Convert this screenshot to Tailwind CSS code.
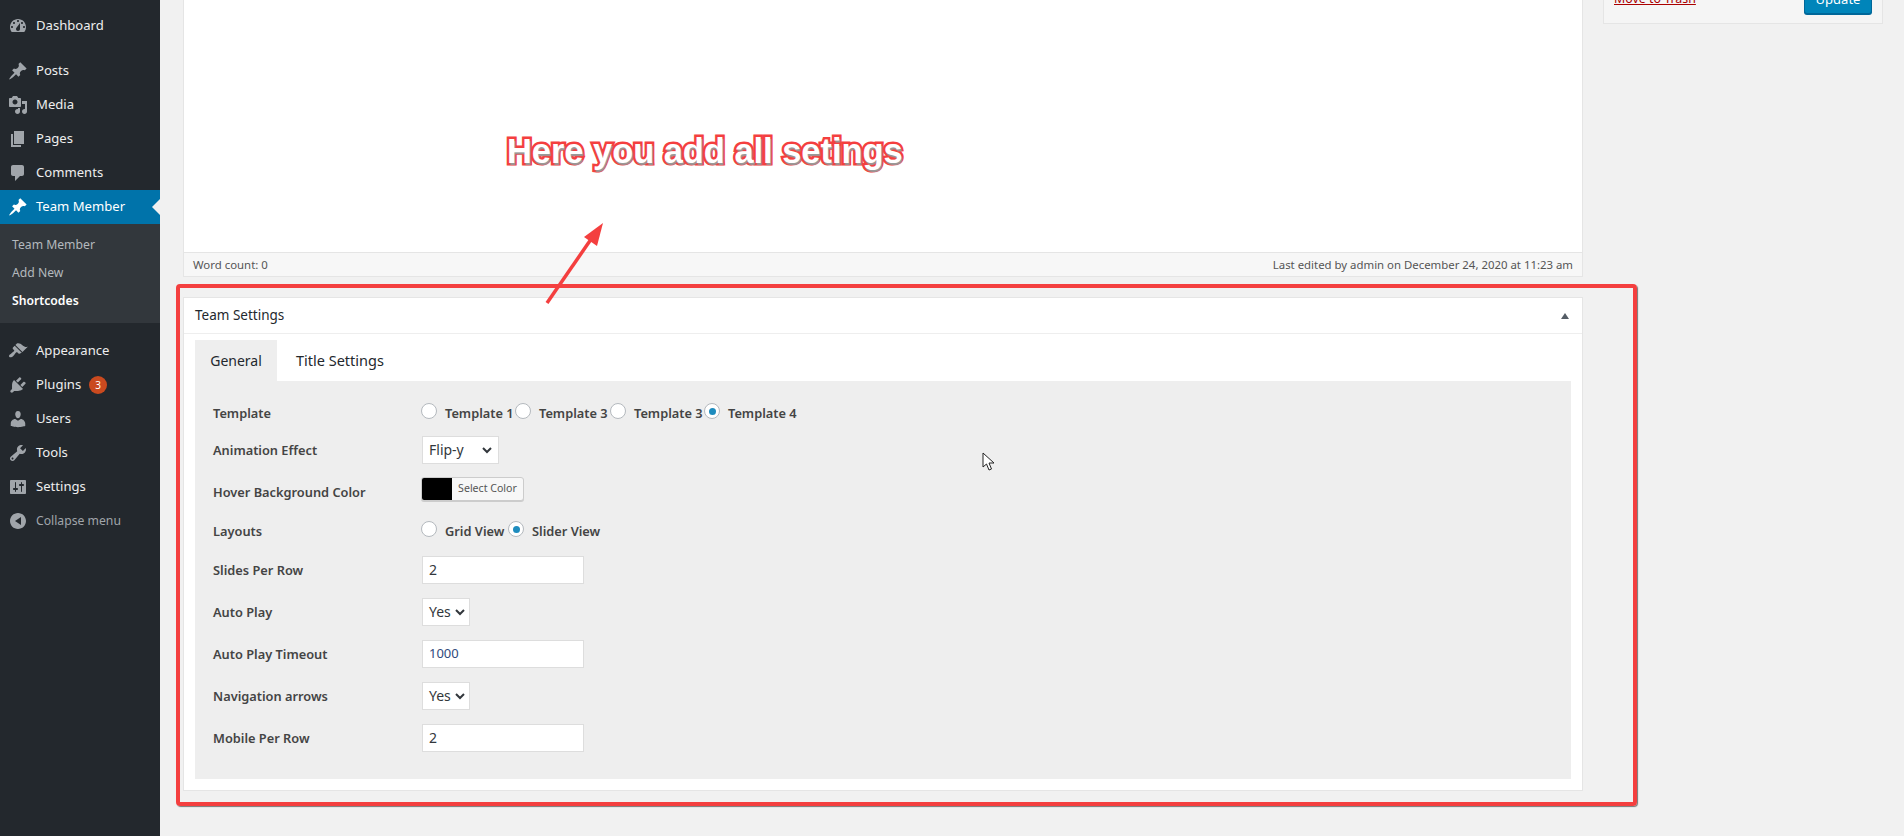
<!DOCTYPE html>
<html lang="en">
<head>
<meta charset="UTF-8">
<title>Edit Team - Team Settings</title>
<script src="https://cdn.jsdelivr.net/npm/@tailwindcss/browser@4"></script>
</head>
<body class="relative h-[836px] overflow-hidden bg-[#f1f1f1] font-['Noto_Sans',sans-serif] text-[13px] text-[#444]">
<div class="flex h-[836px]">

  <!-- admin menu -->
  <aside class="w-[160px] shrink-0 bg-[#23282d] pt-[9px] text-[13.1px] text-[#eee]">
    <a class="flex h-[34px] items-center gap-2 pl-2"><svg class="h-5 w-5 fill-[#a0a5aa]" viewBox="0 0 20 20"><path d="M3.76 16h12.48c1.1-1.37 1.76-3.11 1.76-5 0-4.42-3.58-8-8-8s-8 3.58-8 8c0 1.89.66 3.63 1.76 5zM10 4c.55 0 1 .45 1 1s-.45 1-1 1-1-.45-1-1 .45-1 1-1zM6 6c.55 0 1 .45 1 1s-.45 1-1 1-1-.45-1-1 .45-1 1-1zm8 0c.55 0 1 .45 1 1s-.45 1-1 1-1-.45-1-1 .45-1 1-1zm-5.37 5.55L12 7v6c0 1.1-.9 2-2 2s-2-.9-2-2c0-.57.24-1.08.63-1.45zM4 10c.55 0 1 .45 1 1s-.45 1-1 1-1-.45-1-1 .45-1 1-1zm12 0c.55 0 1 .45 1 1s-.45 1-1 1-1-.45-1-1 .45-1 1-1z"/></svg>Dashboard</a>
    <a class="mt-[11px] flex h-[34px] items-center gap-2 pl-2"><svg class="h-5 w-5 fill-[#a0a5aa]" viewBox="0 0 20 20"><path d="M10.44 3.02l1.82-1.82 6.36 6.35-1.83 1.82c-1.05-.68-2.48-.57-3.41.36l-.75.75c-.92.93-1.04 2.35-.35 3.41l-1.83 1.82-2.41-2.41-2.8 2.79c-.42.42-3.38 2.71-3.8 2.29s1.86-3.39 2.28-3.81l2.79-2.79L4.1 9.36l1.83-1.82c1.05.69 2.48.57 3.4-.36l.75-.75c.93-.92 1.05-2.35.36-3.41z"/></svg>Posts</a>
    <a class="flex h-[34px] items-center gap-2 pl-2"><svg class="h-5 w-5 fill-[#a0a5aa]" viewBox="0 0 20 20"><path d="M13 11V4c0-.55-.45-1-1-1h-1.67L9 1H5L3.67 3H2c-.55 0-1 .45-1 1v7c0 .55.45 1 1 1h10c.55 0 1-.45 1-1zM7 4.5c1.38 0 2.5 1.12 2.5 2.5S8.38 9.5 7 9.5 4.5 8.38 4.5 7 5.62 4.5 7 4.5zM14 6h5v10.5c0 1.38-1.12 2.5-2.5 2.5S14 17.88 14 16.5s1.12-2.5 2.5-2.5c.17 0 .34.02.5.05V9h-3V6zm-4 8.05V13h2v3.5c0 1.38-1.12 2.5-2.5 2.5S7 17.88 7 16.5 8.12 14 9.5 14c.17 0 .34.02.5.05z"/></svg>Media</a>
    <a class="flex h-[34px] items-center gap-2 pl-2"><svg class="h-5 w-5 fill-[#a0a5aa]" viewBox="0 0 20 20"><path d="M6 15V2h10v13H6zm-1 1h8v2H3V5h2v11z"/></svg>Pages</a>
    <a class="flex h-[34px] items-center gap-2 pl-2"><svg class="h-5 w-5 fill-[#a0a5aa]" viewBox="0 0 20 20"><path d="M5 2h9c1.1 0 2 .9 2 2v7c0 1.1-.9 2-2 2h-2l-5 5v-5H5c-1.1 0-2-.9-2-2V4c0-1.1.9-2 2-2z"/></svg>Comments</a>
    <a class="relative flex h-[34px] items-center gap-2 bg-[#0073aa] pl-2 text-white"><svg class="h-5 w-5 fill-white" viewBox="0 0 20 20"><path d="M10.44 3.02l1.82-1.82 6.36 6.35-1.83 1.82c-1.05-.68-2.48-.57-3.41.36l-.75.75c-.92.93-1.04 2.35-.35 3.41l-1.83 1.82-2.41-2.41-2.8 2.79c-.42.42-3.38 2.71-3.8 2.29s1.86-3.39 2.28-3.81l2.79-2.79L4.1 9.36l1.83-1.82c1.05.69 2.48.57 3.4-.36l.75-.75c.93-.92 1.05-2.35.36-3.41z"/></svg>Team Member<span class="absolute right-0 top-[9px] h-0 w-0 border-y-[8px] border-r-[8px] border-y-transparent border-r-[#f1f1f1]"></span></a>
    <div class="bg-[#32373c] pb-2 pt-[7px] text-[12.2px] text-[#b4b9be]">
      <a class="flex h-[28px] items-center pl-3">Team Member</a>
      <a class="flex h-[28px] items-center pl-3">Add New</a>
      <a class="flex h-[28px] items-center pl-3 font-semibold text-white">Shortcodes</a>
    </div>
    <a class="mt-[11px] flex h-[34px] items-center gap-2 pl-2"><svg class="h-5 w-5 fill-[#a0a5aa]" viewBox="0 0 20 20"><path d="M14.48 11.06L7.41 3.99l1.5-1.5c.5-.56 2.3-.47 3.51.32 1.21.8 1.43 1.28 2.91 2.1 1.18.64 2.45 1.26 4.45.85zm-.71.71L6.7 4.7 4.93 6.47c-.39.39-.39 1.02 0 1.41l1.06 1.06c.39.39.39 1.03 0 1.42-.6.6-1.43 1.11-2.21 1.69-.35.26-.7.53-1.01.84C1.43 13.23.4 14.95 1.4 15.95c.98 1 2.78.09 4.1-1.23.31-.31.58-.66.85-1.01.58-.78 1.09-1.61 1.69-2.21.39-.39 1.03-.39 1.42 0l1.06 1.06c.39.39 1.02.39 1.41 0z"/></svg>Appearance</a>
    <a class="flex h-[34px] items-center gap-2 pl-2"><svg class="h-5 w-5 fill-[#a0a5aa]" viewBox="0 0 20 20"><path d="M13.11 4.36L9.87 7.6 8 5.73l3.24-3.24c.35-.34 1.05-.2 1.56.32.52.51.66 1.21.31 1.55zm-8 1.77l.91-1.12 9.01 9.01-1.19.84c-.71.71-2.63 1.16-3.82 1.16H6.14L4.9 17.26c-.59.59-1.54.59-2.12 0-.59-.58-.59-1.53 0-2.12l1.24-1.24v-3.88c0-1.13.4-3.19 1.09-3.89zm7.26 3.97l3.24-3.24c.34-.35 1.04-.21 1.55.31.52.51.66 1.21.31 1.55l-3.24 3.25z"/></svg>Plugins<span class="flex h-[18px] w-[18px] items-center justify-center rounded-full bg-[#ca4a1f] text-[10px] text-white">3</span></a>
    <a class="flex h-[34px] items-center gap-2 pl-2"><svg class="h-5 w-5 fill-[#a0a5aa]" viewBox="0 0 20 20"><path d="M10 9.25c-2.27 0-2.73-3.44-2.73-3.44C7 4.02 7.82 2 9.97 2c2.16 0 2.98 2.02 2.71 3.81 0 0-.41 3.44-2.68 3.44zm0 2.57L12.72 10c2.39 0 4.52 2.33 4.52 4.53v2.49s-3.65 1.13-7.24 1.13c-3.65 0-7.24-1.13-7.24-1.13v-2.49c0-2.25 1.94-4.48 4.47-4.48z"/></svg>Users</a>
    <a class="flex h-[34px] items-center gap-2 pl-2"><svg class="h-5 w-5 fill-[#a0a5aa]" viewBox="0 0 20 20"><path d="M16.68 9.77c-1.34 1.34-3.3 1.67-4.95.99l-5.41 6.52c-.99.99-2.59.99-3.58 0s-.99-2.59 0-3.57l6.52-5.42c-.68-1.65-.35-3.61.99-4.95 1.28-1.28 3.12-1.62 4.72-1.06l-2.89 2.89 2.82 2.82 2.86-2.87c.53 1.58.18 3.39-1.08 4.65zM3.81 16.21c.4.39 1.04.39 1.43 0 .4-.4.4-1.04 0-1.43-.39-.4-1.03-.4-1.43 0-.39.39-.39 1.03 0 1.43z"/></svg>Tools</a>
    <a class="flex h-[34px] items-center gap-2 pl-2"><svg class="h-5 w-5 fill-[#a0a5aa]" viewBox="0 0 20 20"><path d="M18 16V4c0-.55-.45-1-1-1H3c-.55 0-1 .45-1 1v12c0 .55.45 1 1 1h14c.55 0 1-.45 1-1zM8 11h1c.55 0 1 .45 1 1s-.45 1-1 1H8v1.5c0 .28-.22.5-.5.5s-.5-.22-.5-.5V13H6c-.55 0-1-.45-1-1s.45-1 1-1h1V5.5c0-.28.22-.5.5-.5s.5.22.5.5V11zm5-2h-1c-.55 0-1-.45-1-1s.45-1 1-1h1V5.5c0-.28.22-.5.5-.5s.5.22.5.5V7h1c.55 0 1 .45 1 1s-.45 1-1 1h-1v5.5c0 .28-.22.5-.5.5s-.5-.22-.5-.5V9z"/></svg>Settings</a>
    <a class="flex h-[34px] items-center gap-2 pl-2 text-[12.2px] text-[#a0a5aa]"><svg class="h-5 w-5 fill-[#a0a5aa]" viewBox="0 0 20 20"><path fill-rule="evenodd" d="M18 10c0-4.42-3.58-8-8-8s-8 3.58-8 8 3.58 8 8 8 8-3.58 8-8zm-5-4v8l-6-4z"/></svg>Collapse menu</a>
  </aside>

  <!-- content -->
  <main class="flex flex-1 items-start gap-[20px] pl-[23px]">
    <div class="w-[1400px] shrink-0">
      <!-- editor, scrolled past its top -->
      <div class="flex h-[277px] flex-col border border-t-0 border-[#e5e5e5] bg-white">
        <div class="flex-1"></div>
        <div class="flex h-[24px] items-center justify-between border-t border-[#e5e5e5] bg-[#f7f7f7] px-[9px] text-[11.4px] text-[#555]">
          <span>Word count: 0</span>
          <span>Last edited by admin on December 24, 2020 at 11:23 am</span>
        </div>
      </div>

      <!-- Team Settings metabox -->
      <section class="mt-[20px] h-[494px] border border-[#e5e5e5] bg-white">
        <div class="flex h-[36px] items-center justify-between border-b border-[#eee] pl-[11px] pr-[13px] text-[13.5px] text-[#23282d]">
          <span>Team Settings</span>
          <span class="h-0 w-0 border-x-[4px] border-b-[6px] border-x-transparent border-b-[#555d66]"></span>
        </div>
        <div class="mx-[11px] mt-[6px]">
          <div class="flex h-[41px] text-[14px] text-[#23282d]">
            <span class="flex w-[82px] items-center justify-center bg-[#eee]">General</span>
            <span class="flex items-center pl-[19px] text-[14.5px]">Title Settings</span>
          </div>
          <div class="h-[398px] bg-[#eee] px-[18px] pt-[15px] text-[12.8px] font-semibold">

            <div class="flex h-[36px] items-center">
              <span class="w-[208px]">Template</span>
              <label class="flex w-[94px] items-center"><span class="mb-[6px] mr-2 h-4 w-4 rounded-full border border-[#b4b9be] bg-white"></span>Template 1</label>
              <label class="flex w-[95px] items-center"><span class="mb-[6px] mr-2 h-4 w-4 rounded-full border border-[#b4b9be] bg-white"></span>Template 3</label>
              <label class="flex w-[94px] items-center"><span class="mb-[6px] mr-2 h-4 w-4 rounded-full border border-[#b4b9be] bg-white"></span>Template 3</label>
              <label class="flex items-center"><span class="mb-[6px] mr-2 flex h-4 w-4 items-center justify-center rounded-full border border-[#b4b9be] bg-white"><span class="h-[7px] w-[7px] rounded-full bg-[#1e8cbe]"></span></span>Template 4</label>
            </div>

            <div class="flex h-[38px] items-center">
              <span class="w-[209px]">Animation Effect</span>
              <span class="mb-[3px] flex h-[28px] w-[77px] items-center justify-between border border-[#ddd] bg-white pl-[6px] pr-[6px] text-[14px] font-normal text-[#32373c]">Flip-y<svg class="h-[10px] w-[10px] fill-none stroke-[#32373c] stroke-[2]" viewBox="0 0 10 10"><path d="M1 3l4 4 4-4"/></svg></span>
            </div>

            <div class="flex h-[46px] items-center">
              <span class="w-[208px]">Hover Background Color</span>
              <span class="mb-[8px] flex h-[24px] w-[103px] overflow-hidden rounded-[3px] border border-[#ccc] bg-[#f7f7f7] shadow-[0_1px_0_#ccc]">
                <span class="w-[30px] bg-black"></span>
                <span class="flex flex-1 items-center justify-center text-[10.6px] font-normal text-[#555]">Select Color</span>
              </span>
            </div>

            <div class="flex h-[32px] items-center">
              <span class="w-[208px]">Layouts</span>
              <label class="flex w-[87px] items-center"><span class="mb-[6px] mr-2 h-4 w-4 rounded-full border border-[#b4b9be] bg-white"></span>Grid View</label>
              <label class="flex items-center"><span class="mb-[6px] mr-2 flex h-4 w-4 items-center justify-center rounded-full border border-[#b4b9be] bg-white"><span class="h-[7px] w-[7px] rounded-full bg-[#1e8cbe]"></span></span>Slider View</label>
            </div>

            <div class="flex h-[46px] items-center">
              <span class="w-[209px]">Slides Per Row</span>
              <span class="mb-[3px] flex h-[28px] w-[162px] items-center border border-[#ddd] bg-white pl-[6px] text-[14px] font-normal text-[#32373c]">2</span>
            </div>

            <div class="flex h-[38px] items-center">
              <span class="w-[209px]">Auto Play</span>
              <span class="mb-[3px] flex h-[28px] w-[48px] items-center justify-between border border-[#ddd] bg-white pl-[6px] pr-[4px] text-[14px] font-normal text-[#32373c]">Yes<svg class="h-[10px] w-[10px] fill-none stroke-[#32373c] stroke-[2]" viewBox="0 0 10 10"><path d="M1 3l4 4 4-4"/></svg></span>
            </div>

            <div class="flex h-[46px] items-center">
              <span class="w-[209px]">Auto Play Timeout</span>
              <span class="mb-[3px] flex h-[28px] w-[162px] items-center border border-[#ddd] bg-white pl-[6px] text-[13px] font-normal text-[#2f4a7c]">1000</span>
            </div>

            <div class="flex h-[38px] items-center">
              <span class="w-[209px]">Navigation arrows</span>
              <span class="mb-[3px] flex h-[28px] w-[48px] items-center justify-between border border-[#ddd] bg-white pl-[6px] pr-[4px] text-[14px] font-normal text-[#32373c]">Yes<svg class="h-[10px] w-[10px] fill-none stroke-[#32373c] stroke-[2]" viewBox="0 0 10 10"><path d="M1 3l4 4 4-4"/></svg></span>
            </div>

            <div class="flex h-[46px] items-center">
              <span class="w-[209px]">Mobile Per Row</span>
              <span class="mb-[3px] flex h-[28px] w-[162px] items-center border border-[#ddd] bg-white pl-[6px] text-[14px] font-normal text-[#32373c]">2</span>
            </div>
          </div>
        </div>
      </section>
    </div>

    <!-- publish box, mostly scrolled away -->
    <aside class="flex h-[24px] w-[280px] items-end justify-between overflow-hidden border border-t-0 border-[#e5e5e5] bg-[#f5f5f5] pb-[9px] pl-[10px] pr-[10px]">
      <a class="mb-[7px] text-[12.4px] leading-[16px] text-[#a00] underline">Move to Trash</a>
      <span class="flex h-[28px] w-[68px] shrink-0 items-center justify-center rounded-[3px] border border-[#006799] bg-[#0085ba] text-white shadow-[0_1px_0_#006799]">Update</span>
    </aside>
  </main>
</div>

<!-- screenshot annotations -->
<div class="absolute left-[176px] top-[284px] h-[522px] w-[1461px] rounded-[4px] border-4 border-[#f43f3f] shadow-[1px_1px_1px_#777]"></div>
<svg class="absolute left-[540px] top-[215px] h-[95px] w-[70px]" viewBox="0 0 70 95">
  <path d="M7 88L56 17" class="fill-none stroke-[#f43f3f] stroke-[3.5]"/>
  <path d="M63 8L57 31 44 22z" class="fill-[#f43f3f]"/>
</svg>
<span class="absolute left-[507px] top-[129px] whitespace-nowrap font-['Liberation_Sans',sans-serif] text-[34.4px] font-bold leading-[44px] text-white [-webkit-text-stroke:5px_#f43f3f] [paint-order:stroke_fill] [text-shadow:1px_2px_1px_#999]">Here you add all setings</span>
<svg class="absolute left-[982px] top-[452px] h-[20px] w-[14px]" viewBox="0 0 14 20">
  <path d="M1 1v14l3.5-3 2.5 6 2.5-1-2.5-6H12z" class="fill-white stroke-[#222] stroke-1"/>
</svg>
</body>
</html>
